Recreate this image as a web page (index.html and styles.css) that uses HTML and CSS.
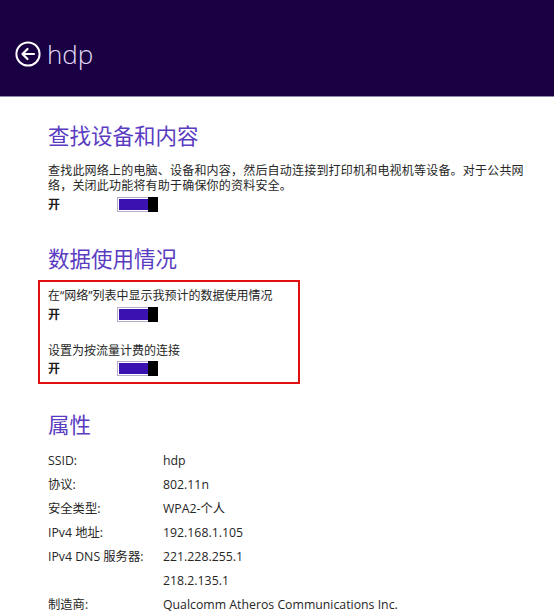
FILE: index.html
```html
<!DOCTYPE html>
<html lang="zh-CN">
<head>
<meta charset="utf-8">
<title>hdp</title>
<link rel="stylesheet" href="styles.css">
</head>
<body>
<header class="top">
  <svg class="back" width="26" height="26" viewBox="0 0 26 26" aria-hidden="true">
    <circle cx="13" cy="13" r="11.6" fill="none" stroke="#ffffff" stroke-width="2"/>
    <path d="M19 13H7.5M12.5 8L7.5 13L12.5 18" fill="none" stroke="#ffffff" stroke-width="2.2" stroke-linecap="round" stroke-linejoin="round"/>
  </svg>
  <span class="title">hdp</span>
</header>
<main class="content">
  <section class="sec sec-first">
    <h2 class="heading">查找设备和内容</h2>
    <p class="desc">查找此网络上的电脑、设备和内容，然后自动连接到打印机和电视机等设备。对于公共网络，关闭此功能将有助于确保你的资料安全。</p>
    <div class="toggle-row">
      <span class="state">开</span>
      <span class="toggle"><span class="track"><span class="fill"></span></span><span class="thumb"></span></span>
    </div>
  </section>
  <section class="sec sec-data">
    <h2 class="heading">数据使用情况</h2>
    <div class="highlight">
      <p class="opt">在<span class="q">“</span>网络<span class="q">”</span>列表中显示我预计的数据使用情况</p>
      <div class="toggle-row">
        <span class="state">开</span>
        <span class="toggle"><span class="track"><span class="fill"></span></span><span class="thumb"></span></span>
      </div>
      <p class="opt opt-second">设置为按流量计费的连接</p>
      <div class="toggle-row">
        <span class="state">开</span>
        <span class="toggle"><span class="track"><span class="fill"></span></span><span class="thumb"></span></span>
      </div>
    </div>
  </section>
  <section class="sec sec-props">
    <h2 class="heading">属性</h2>
    <dl class="props">
      <dt>SSID:</dt><dd>hdp</dd>
      <dt>协议:</dt><dd>802.11n</dd>
      <dt>安全类型:</dt><dd>WPA2-个人</dd>
      <dt>IPv4 地址:</dt><dd>192.168.1.105</dd>
      <dt>IPv4 DNS 服务器:</dt><dd>221.228.255.1</dd>
      <dt></dt><dd>218.2.135.1</dd>
      <dt>制造商:</dt><dd>Qualcomm Atheros Communications Inc.</dd>
    </dl>
  </section>
</main>
</body>
</html>
```
FILE: styles.css
```css
html, body {
  margin: 0;
  padding: 0;
  background: #ffffff;
}
body {
  font-family: "Open Sans", "Noto Sans CJK SC", sans-serif;
  color: #1e1e1e;
  width: 554px;
  height: 615px;
  overflow: hidden;
}
.top {
  height: 96px;
  background: #180042;
  border-bottom: 1px solid #8f88a8;
  box-sizing: content-box;
  display: flex;
  align-items: flex-end;
  padding: 0 0 0 15px;
}
.back {
  display: block;
  margin-bottom: 29px;
}
.title {
  font-family: "Open Sans", sans-serif;
  font-weight: 300;
  font-size: 26px;
  line-height: 34px;
  color: #e6def6;
  margin-left: 6px;
  margin-bottom: 25px;
}
.content {
  padding-left: 48px;
}
.sec {
  margin: 0;
}
.heading {
  margin: 0;
  font-family: "Noto Sans CJK SC", sans-serif;
  font-weight: 400;
  font-size: 21.5px;
  line-height: 30px;
  color: #5a3cc2;
}
.sec-first {
  padding-top: 23px;
}
.sec-first .heading {
  margin-bottom: 12px;
}
.desc {
  margin: 0;
  width: 482px;
  font-family: "Noto Sans CJK SC", sans-serif;
  font-size: 12px;
  line-height: 15px;
  letter-spacing: 0.2px;
  color: #262626;
}
.toggle-row {
  display: flex;
  align-items: center;
  height: 16px;
}
.sec-first .toggle-row {
  margin-top: 4px;
}
.state {
  width: 69px;
  font-family: "Noto Sans CJK SC", sans-serif;
  font-weight: 700;
  font-size: 12px;
  line-height: 16px;
}
.toggle {
  display: flex;
  width: 41px;
  height: 15px;
}
.track {
  flex: 1;
  display: flex;
  border: 1px solid #b4acca;
  border-right: none;
  padding: 1px 0 1px 1px;
  background: #ffffff;
}
.fill {
  flex: 1;
  background: #3a12b2;
}
.thumb {
  width: 10px;
  background: #000000;
}
.sec-data {
  margin-top: 31px;
}
.sec-data .heading {
  margin-bottom: 7px;
}
.highlight {
  margin-left: -10px;
  width: 262px;
  box-sizing: border-box;
  border: 2px solid #e01010;
  padding: 5px 8px 6px 8px;
}
.opt {
  margin: 0;
  font-family: "Noto Sans CJK SC", sans-serif;
  font-size: 12px;
  line-height: 16px;
  color: #262626;
}
.q {
  font-family: "Open Sans", sans-serif;
}
.highlight .toggle-row {
  margin-top: 2px;
}
.opt-second {
  margin-top: 20px;
}
.sec-props {
  margin-top: 25px;
}
.sec-props .heading {
  margin-bottom: 10px;
}
.props {
  margin: 0;
  display: grid;
  grid-template-columns: 115px auto;
  grid-auto-rows: 24px;
  font-size: 12.3px;
  line-height: 24px;
  color: #262626;
}
.props dt, .props dd {
  margin: 0;
  white-space: nowrap;
}
```
